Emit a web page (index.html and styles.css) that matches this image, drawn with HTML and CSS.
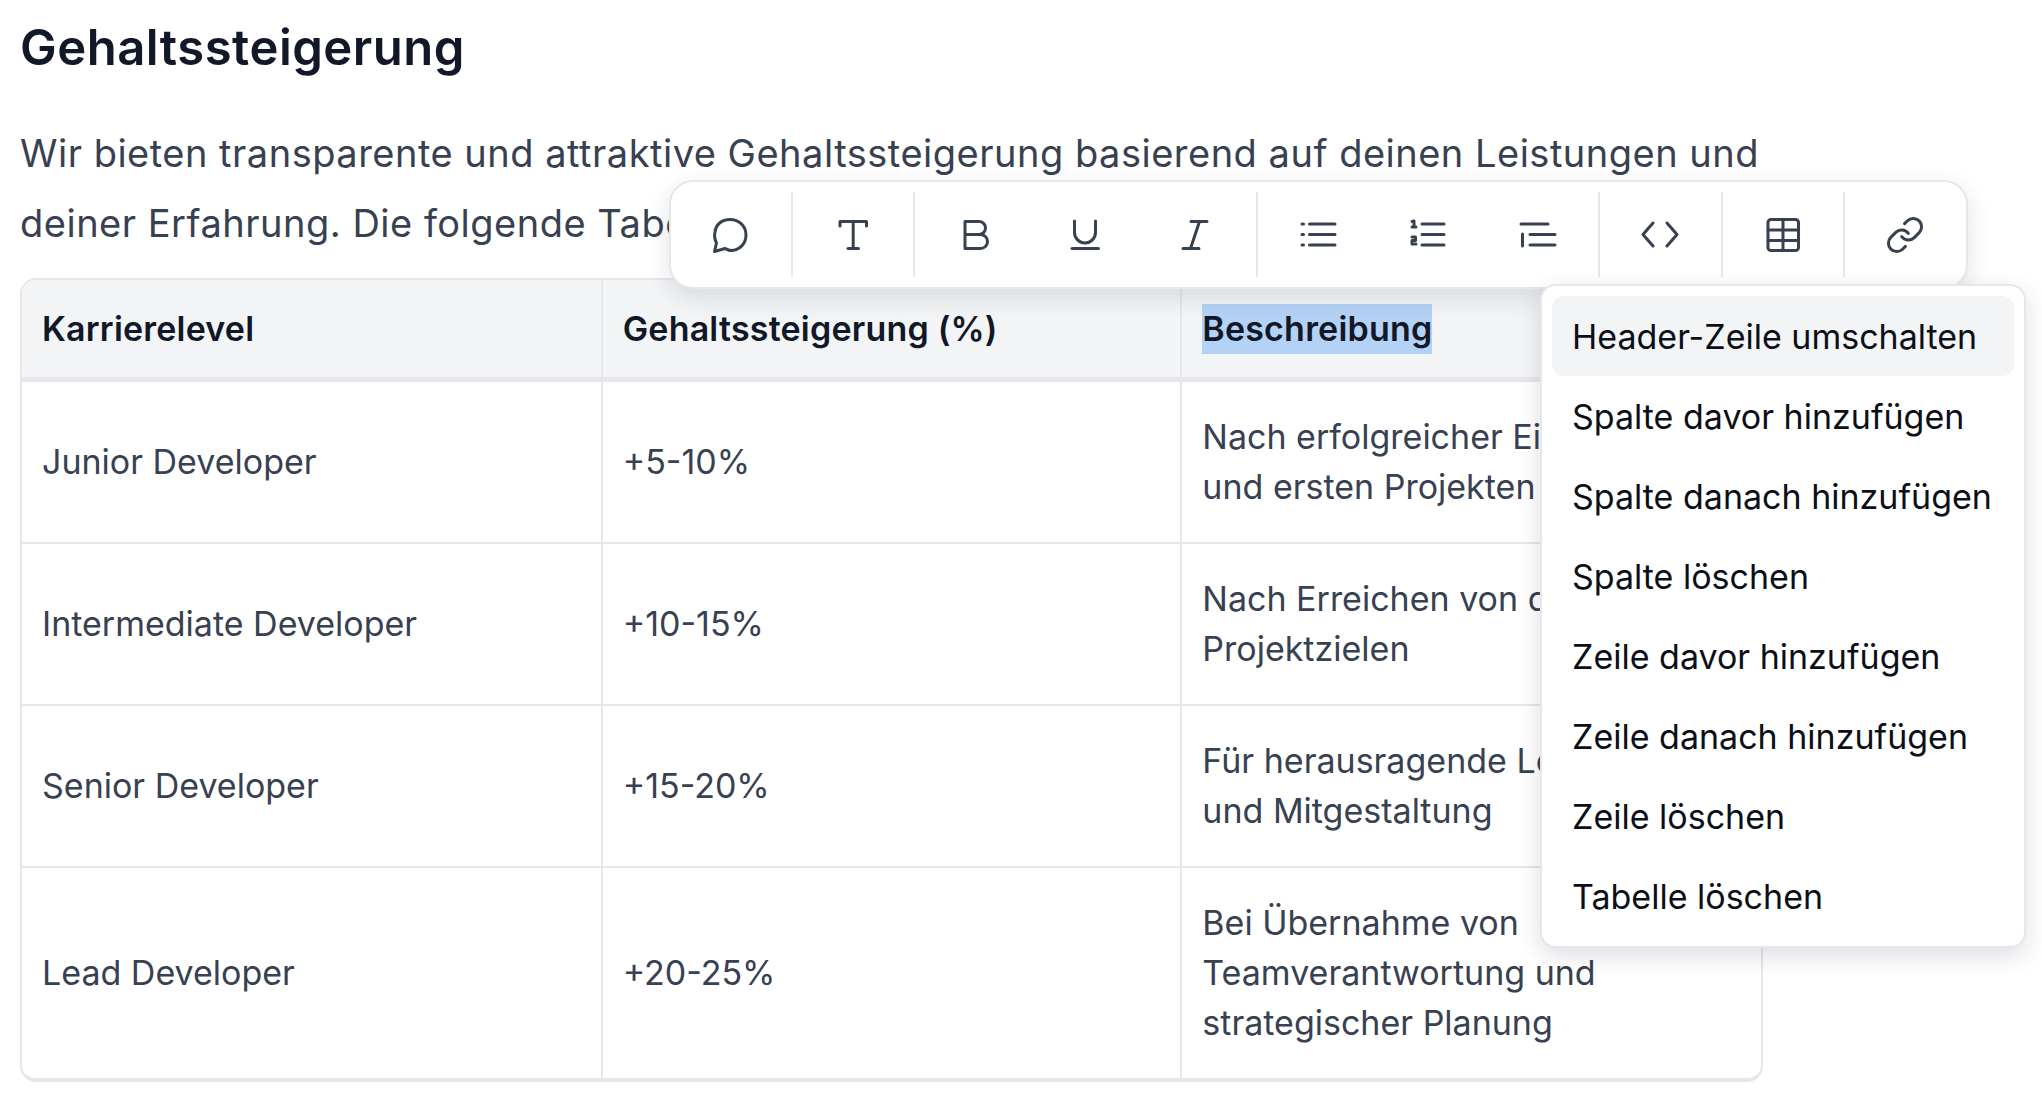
FILE: index.html
```html
<!DOCTYPE html>
<html lang="de">
<head>
    <meta charset="UTF-8">
    <title>Gehaltssteigerung</title>
    <link rel="stylesheet" href="styles.css">
</head>
<body>
    <div class="doc">
        <h2>Gehaltssteigerung</h2>
        <p>Wir bieten transparente und attraktive Gehaltssteigerung basierend auf deinen Leistungen und deiner Erfahrung. Die folgende Tabelle zeigt die typischen Steigerungen:</p>

        <div class="table-wrap">
            <table>
                <thead>
                    <tr>
                        <th>Karrierelevel</th>
                        <th>Gehaltssteigerung (%)</th>
                        <th><span class="selected">Beschreibung</span></th>
                    </tr>
                </thead>
                <tbody>
                    <tr>
                        <td>Junior Developer</td>
                        <td>+5-10%</td>
                        <td>Nach erfolgreicher Einarbeitung und ersten Projekten</td>
                    </tr>
                    <tr>
                        <td>Intermediate Developer</td>
                        <td>+10-15%</td>
                        <td>Nach Erreichen von definierten Projektzielen</td>
                    </tr>
                    <tr>
                        <td>Senior Developer</td>
                        <td>+15-20%</td>
                        <td>Für herausragende Leistungen und Mitgestaltung</td>
                    </tr>
                    <tr>
                        <td>Lead Developer</td>
                        <td>+20-25%</td>
                        <td>Bei Übernahme von Teamverantwortung und strategischer Planung</td>
                    </tr>
                </tbody>
            </table>
        </div>
    </div>

    <!-- floating editor toolbar -->
    <div class="toolbar">
        <div class="tool-group first">
            <button class="tool"><svg viewBox="0 0 40 40"><path d="M4.5 36.5L6.5 28C4.5 24 4.3 20 5 17C6 9 12 4.5 20 4.5C29 4.5 36 11 36 20C36 29 29 35.5 21 35.5C18 35.5 16.5 34 15 33.5Z"/></svg></button>
        </div>
        <div class="tool-group">
            <button class="tool"><svg viewBox="0 0 40 40"><path d="M7 11V6.5H33.5V11M20.2 6.5V33.5M15 33.5H25.5"/></svg></button>
        </div>
        <div class="tool-group">
            <button class="tool"><svg viewBox="0 0 40 40"><path d="M10 6.5H24A6.5 6.5 0 0 1 24 19.5H10ZM10 19.5H25.5A7 7 0 0 1 25.5 33.5H10Z"/></svg></button>
            <button class="tool"><svg viewBox="0 0 40 40"><path d="M9.5 6V17.5A10.5 10.5 0 0 0 30.5 17.5V6M7 33.5H33.5"/></svg></button>
            <button class="tool"><svg viewBox="0 0 40 40"><path d="M16 6.5H32M8 33.5H24M24.5 6.5L15.5 33.5"/></svg></button>
        </div>
        <div class="tool-group">
            <button class="tool"><svg viewBox="0 0 40 40"><path d="M11.5 9H37M11.5 19.5H37M11.5 30H37M4 9H5.5M4 19.5H5.5M4 30H5.5"/></svg></button>
            <button class="tool"><svg viewBox="0 0 40 40"><path d="M14 9H36M14 19.5H36M14 30H36M4 6.5L6 6V12M4 12H8M4 22H7.5V25.500H4V29H8"/></svg></button>
            <button class="tool"><svg viewBox="0 0 40 40"><path d="M3 9H30M12 19.500H37M12 30H37M4.500 19V31"/></svg></button>
        </div>
        <div class="tool-group">
            <button class="tool"><svg viewBox="0 0 40 40"><path d="M13 8L3 19.500L13 31M27 8L37 19.500L27 31"/></svg></button>
        </div>
        <div class="tool-group">
            <button class="tool"><svg viewBox="0 0 40 40"><rect x="5" y="4.500" width="30.500" height="31" rx="3"/><path d="M20 4.500V35.500M5 15H35.500M5 25.500H35.500"/></svg></button>
        </div>
        <div class="tool-group last">
            <button class="tool"><svg viewBox="0 0 24 24" class="thin"><path d="M10 13a5 5 0 0 0 7.54.54l3-3a5 5 0 0 0-7.07-7.07l-1.72 1.71"/><path d="M14 11a5 5 0 0 0-7.54-.54l-3 3a5 5 0 0 0 7.07 7.07l1.71-1.71"/></svg></button>
        </div>
    </div>

    <!-- table context menu -->
    <div class="menu">
        <div class="menu-item active">Header-Zeile umschalten</div>
        <div class="menu-item">Spalte davor hinzufügen</div>
        <div class="menu-item">Spalte danach hinzufügen</div>
        <div class="menu-item">Spalte löschen</div>
        <div class="menu-item">Zeile davor hinzufügen</div>
        <div class="menu-item">Zeile danach hinzufügen</div>
        <div class="menu-item">Zeile löschen</div>
        <div class="menu-item">Tabelle löschen</div>
    </div>
</body>
</html>
```

FILE: styles.css
```css
html, body {
    height: 100%;
    margin: 0;
    padding: 0;
    background: #fff;
    font-family: 'Inter', 'Liberation Sans', sans-serif;
    overflow: hidden;
}

.doc {
    padding: 0 20px;
}

h2 {
    margin: 0;
    padding-top: 18px;
    font-size: 49px;
    line-height: 60px;
    font-weight: 600;
    letter-spacing: 0.5px;
    color: #111827;
}

p {
    margin: 40px 0 0;
    width: 1765px;
    font-size: 38px;
    line-height: 70px;
    letter-spacing: 0.5px;
    color: #374151;
}

/* Table */
.table-wrap {
    width: 1743px;
    margin-top: 20px;
    box-sizing: border-box;
    border: 2px solid #e5e7eb;
    border-bottom-width: 4px;
    border-radius: 16px;
    overflow: hidden;
}

table {
    width: 100%;
    table-layout: fixed;
    border-collapse: collapse;
}

th, td {
    padding: 30px 20px;
    font-size: 34px;
    line-height: 50px;
    text-align: left;
    border-left: 2px solid #e5e7eb;
    border-top: 2px solid #e5e7eb;
}

th:first-child, td:first-child {
    border-left: none;
}

th {
    padding: 24px 20px 23px;
    background: #f3f4f6;
    color: #111827;
    font-weight: 600;
    letter-spacing: 0.2px;
    border-top: none;
    border-bottom: 5px solid #e5e7eb;
}

td {
    color: #374151;
}

tbody tr:first-child td {
    border-top: none;
}

.selected {
    display: inline-block;
    background: #b4d1f6;
}

/* Toolbar */
.toolbar {
    position: absolute;
    left: 669px;
    top: 180px;
    display: flex;
    padding: 10px 0;
    background: #fff;
    border: 2px solid #e5e7eb;
    border-radius: 24px;
    box-shadow: 0 8px 24px rgba(17, 24, 39, 0.12);
}

.tool-group {
    display: flex;
    padding: 0 5.25px;
    border-right: 2px solid #e5e7eb;
}

.tool-group.first {
    padding-left: 4.25px;
}

.tool-group.last {
    border-right: none;
}

.tool {
    width: 110px;
    height: 85px;
    padding: 0;
    display: flex;
    align-items: center;
    justify-content: center;
    background: none;
    border: none;
}

.tool svg {
    width: 40px;
    height: 40px;
    fill: none;
    stroke: #374151;
    stroke-width: 3;
    stroke-linecap: round;
    stroke-linejoin: round;
}

.tool svg.thin {
    stroke-width: 1.8;
}

/* Context menu */
.menu {
    position: absolute;
    left: 1540px;
    top: 284px;
    width: 486px;
    box-sizing: border-box;
    padding: 10px;
    background: #fff;
    border: 2px solid #e5e7eb;
    border-radius: 16px;
    box-shadow: 0 8px 24px rgba(17, 24, 39, 0.14);
}

.menu-item {
    height: 80px;
    padding: 0 20px;
    display: flex;
    align-items: center;
    font-size: 34px;
    color: #0b0f17;
    white-space: nowrap;
    border-radius: 12px;
}

.menu-item.active {
    background: #f3f4f6;
}
```
